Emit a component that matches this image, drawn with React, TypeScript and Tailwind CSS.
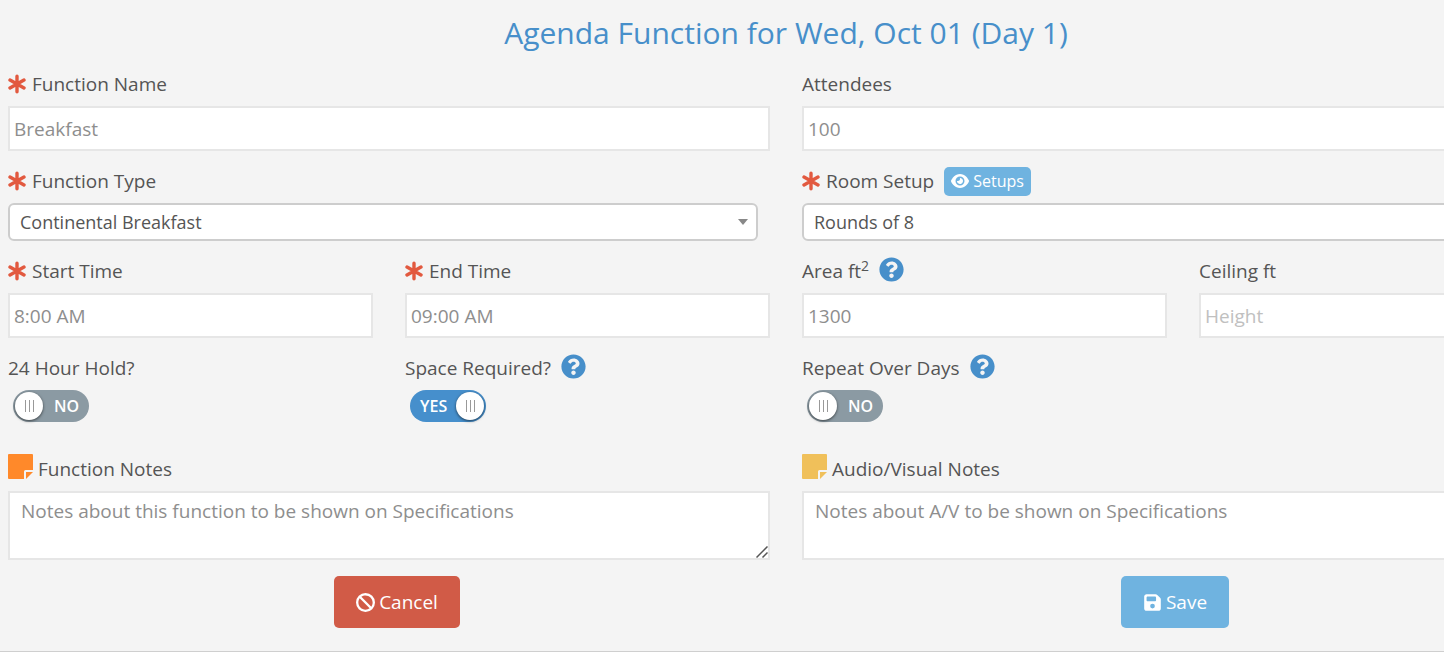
import type { ReactNode } from "react";
import { FaQuestionCircle } from "react-icons/fa";
import { FaBan, FaEye, FaFloppyDisk } from "react-icons/fa6";

const inputClass =
  "block w-full border-2 border-[#e6e6e6] bg-white px-1 text-[19px] leading-7 text-[#8e8e8e] placeholder:text-[#c0c0c0] outline-none focus:border-[#6fb3e0]";

function Required() {
  return (
    <svg
      viewBox="0 0 20 20"
      fill="none"
      stroke="currentColor"
      strokeWidth="3.4"
      strokeLinecap="round"
      role="img"
      aria-label="required"
      className="mr-1 size-5 shrink-0 text-[#e2593f]"
    >
      <path d="M9 2.2V17.8M2 6L16 14M16 6L2 14" />
    </svg>
  );
}

function Help({ topic }: { topic: string }) {
  return (
    <button type="button" aria-label={`Help: ${topic}`} className="mb-1 ml-2.5 shrink-0 text-[#478fca]">
      <FaQuestionCircle className="size-[25px]" />
    </button>
  );
}

function NoteIcon({ className }: { className: string }) {
  return (
    <svg viewBox="0 0 25 25" fill="currentColor" aria-hidden="true" className={`size-[25px] shrink-0 ${className}`}>
      <path d="M1 0H24a1 1 0 0 1 1 1V16H17.5a1.5 1.5 0 0 0-1.5 1.5V25H1a1 1 0 0 1-1-1V1a1 1 0 0 1 1-1Z" />
      <path d="M18 18H25L18 25Z" />
    </svg>
  );
}

function Row({ children }: { children: ReactNode }) {
  return <div className="flex h-7 items-center whitespace-nowrap">{children}</div>;
}

type FieldProps = {
  id: string;
  label: ReactNode;
  required?: boolean;
  value?: string;
  placeholder?: string;
  help?: string;
  className?: string;
};

function Field({ id, label, required, value, placeholder, help, className = "" }: FieldProps) {
  return (
    <div className={className}>
      <Row>
        {required && <Required />}
        <label htmlFor={id}>{label}</label>
        {help && <Help topic={help} />}
      </Row>
      <input
        id={id}
        type="text"
        defaultValue={value}
        placeholder={placeholder}
        className={`${inputClass} mt-2 h-[45px]`}
      />
    </div>
  );
}

function Dropdown({ id, options }: { id: string; options: string[] }) {
  return (
    <div className="relative mt-2 mr-3">
      <select
        id={id}
        className="block h-[38px] w-full appearance-none rounded-md border-2 border-[#cdcdcd] bg-white pr-8 pl-2.5 text-[18px] text-[#555] outline-none"
      >
        {options.map((option) => (
          <option key={option}>{option}</option>
        ))}
      </select>
      <svg
        viewBox="0 0 10 6"
        fill="currentColor"
        aria-hidden="true"
        className="pointer-events-none absolute top-4 right-2.5 h-1.5 w-2.5 text-[#888]"
      >
        <path d="M0 0H10L5 6Z" />
      </svg>
    </div>
  );
}

function Toggle({ id, label, help, on }: { id: string; label: string; help?: string; on?: boolean }) {
  return (
    <div>
      <Row>
        <label htmlFor={id}>{label}</label>
        {help && <Help topic={help} />}
      </Row>
      <label
        htmlFor={id}
        className="group mt-2 ml-[5px] flex h-8 w-[76px] cursor-pointer items-center justify-between rounded-full bg-[#8b9aa3] px-0.5 has-checked:flex-row-reverse has-checked:bg-[#468fcc]"
      >
        <input id={id} type="checkbox" defaultChecked={on} className="sr-only" />
        <span className="flex size-7 items-center justify-center gap-[3px] rounded-full bg-white shadow-[0_1px_3px_rgba(0,0,0,0.6)]">
          <i className="h-3 w-px bg-[#999]" />
          <i className="h-3 w-px bg-[#999]" />
          <i className="h-3 w-px bg-[#999]" />
        </span>
        <span className="px-2 text-[16px] font-semibold text-white group-has-checked:hidden">NO</span>
        <span className="hidden px-2 text-[16px] font-semibold text-white group-has-checked:inline">YES</span>
      </label>
    </div>
  );
}

function Notes({ id, label, text, iconClass }: { id: string; label: string; text: string; iconClass: string }) {
  return (
    <div className="col-span-2">
      <div className="flex h-7 gap-[5px] whitespace-nowrap">
        <NoteIcon className={iconClass} />
        <label htmlFor={id} className="leading-[30px]">
          {label}
        </label>
      </div>
      <div className="relative mt-[9px]">
        <textarea
          id={id}
          defaultValue={text}
          className="block h-[69px] w-full resize-none border-2 border-[#e6e6e6] bg-white px-[11px] py-1 text-[19px] leading-7 text-[#8e8e8e] outline-none focus:border-[#6fb3e0]"
        />
        <svg
          viewBox="0 0 12 12"
          fill="none"
          stroke="#555"
          strokeWidth="1.5"
          aria-hidden="true"
          className="pointer-events-none absolute right-0.5 bottom-0.5 size-3"
        >
          <path d="M0.5 11.5L11.5 0.5M6.5 11.5L11.5 6.5" />
        </svg>
      </div>
    </div>
  );
}

export default function App() {
  return (
    <main className="overflow-x-clip border-b border-[#cfcfcf] bg-[#f4f4f4] font-['Open_Sans','Noto_Sans',sans-serif] text-[19px] leading-7 text-[#555]">
      <form className="-mr-32 px-2 pt-3 pb-[23px]" onSubmit={(event) => event.preventDefault()}>
        <h1 className="text-center text-[30px] leading-[42px] text-[#478fca]">
          Agenda Function for Wed, Oct 01 (Day 1)
        </h1>

        <div className="mt-4 grid grid-cols-4 gap-x-8">
          <Field id="name" label="Function Name" required value="Breakfast" className="col-span-2" />
          <Field id="attendees" label="Attendees" value="100" className="col-span-2" />
        </div>

        <div className="mt-4 grid grid-cols-4 gap-x-8">
          <div className="col-span-2">
            <Row>
              <Required />
              <label htmlFor="type">Function Type</label>
            </Row>
            <Dropdown id="type" options={["Continental Breakfast", "Lunch", "Dinner"]} />
          </div>
          <div className="col-span-2">
            <Row>
              <Required />
              <label htmlFor="setup">Room Setup</label>
              <button
                type="button"
                className="ml-2.5 flex h-[29px] items-center gap-1 rounded-[5px] bg-[#6fb3e0] px-[7px] text-[16px] text-white"
              >
                <FaEye className="size-[18px]" />
                Setups
              </button>
            </Row>
            <Dropdown id="setup" options={["Rounds of 8", "Rounds of 10", "Theater"]} />
          </div>
        </div>

        <div className="mt-4 grid grid-cols-4 gap-x-8">
          <Field id="start" label="Start Time" required value="8:00 AM" />
          <Field id="end" label="End Time" required value="09:00 AM" />
          <Field
            id="area"
            label={
              <>
                Area ft<sup className="text-[14px]">2</sup>
              </>
            }
            value="1300"
            help="Area"
          />
          <Field id="ceiling" label="Ceiling ft" placeholder="Height" />
        </div>

        <div className="mt-4 grid grid-cols-4 gap-x-8">
          <Toggle id="hold" label="24 Hour Hold?" />
          <Toggle id="space" label="Space Required?" help="Space required" on />
          <Toggle id="repeat" label="Repeat Over Days" help="Repeat over days" />
        </div>

        <div className="mt-8 grid grid-cols-4 gap-x-8">
          <Notes
            id="notes"
            label="Function Notes"
            text="Notes about this function to be shown on Specifications"
            iconClass="text-[#ff892a]"
          />
          <Notes
            id="av"
            label="Audio/Visual Notes"
            text="Notes about A/V to be shown on Specifications"
            iconClass="text-[#f0c05a]"
          />
        </div>

        <div className="mt-4 grid grid-cols-2">
          <div className="flex justify-center">
            <button
              type="button"
              className="flex h-[52px] items-center gap-1 rounded-[5px] bg-[#d15b47] px-[22px] text-white"
            >
              <FaBan className="size-[19px]" />
              Cancel
            </button>
          </div>
          <div className="flex justify-center">
            <button
              type="submit"
              className="flex h-[52px] items-center gap-1 rounded-[5px] bg-[#6fb3e0] px-[22px] text-white"
            >
              <FaFloppyDisk className="size-[19px]" />
              Save
            </button>
          </div>
        </div>
      </form>
    </main>
  );
}
